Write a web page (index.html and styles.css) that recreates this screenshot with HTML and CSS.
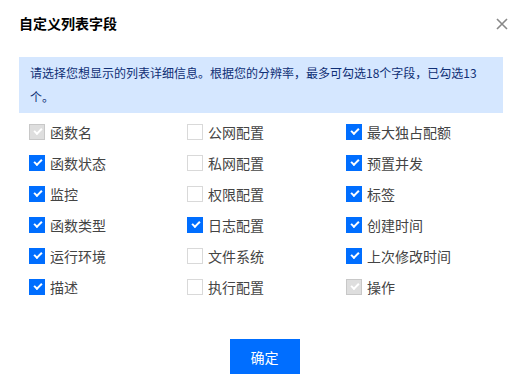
FILE: index.html
```html
<!DOCTYPE html>
<html lang="zh-CN">
<head>
  <meta charset="UTF-8">
  <title>自定义列表字段</title>
  <link rel="stylesheet" href="styles.css">
</head>
<body>
  <div class="dialog">
    <div class="dialog-head">
      <h2 class="dialog-title">自定义列表字段</h2>
      <button class="dialog-close" type="button" aria-label="关闭">
        <svg width="12" height="12" viewBox="0 0 12 12"><path d="M1 1L11 11M11 1L1 11" stroke="#888" stroke-width="1.6" fill="none"/></svg>
      </button>
    </div>

    <div class="notice">请选择您想显示的列表详细信息。根据您的分辨率，最多可勾选18个字段，已勾选13个。</div>

    <div class="fields">
      <label class="field"><span class="box disabled"></span>函数名</label>
      <label class="field"><span class="box"></span>公网配置</label>
      <label class="field"><span class="box checked"></span>最大独占配额</label>

      <label class="field"><span class="box checked"></span>函数状态</label>
      <label class="field"><span class="box"></span>私网配置</label>
      <label class="field"><span class="box checked"></span>预置并发</label>

      <label class="field"><span class="box checked"></span>监控</label>
      <label class="field"><span class="box"></span>权限配置</label>
      <label class="field"><span class="box checked"></span>标签</label>

      <label class="field"><span class="box checked"></span>函数类型</label>
      <label class="field"><span class="box checked"></span>日志配置</label>
      <label class="field"><span class="box checked"></span>创建时间</label>

      <label class="field"><span class="box checked"></span>运行环境</label>
      <label class="field"><span class="box"></span>文件系统</label>
      <label class="field"><span class="box checked"></span>上次修改时间</label>

      <label class="field"><span class="box checked"></span>描述</label>
      <label class="field"><span class="box"></span>执行配置</label>
      <label class="field"><span class="box disabled"></span>操作</label>
    </div>

    <div class="dialog-foot">
      <button class="btn-primary" type="button">确定</button>
    </div>
  </div>
</body>
</html>
```

FILE: styles.css
```css
body { margin: 0; background: #fff; font-family: "Noto Sans CJK SC", "Noto Sans", sans-serif; color: #444; }
.dialog { width: 529px; height: 385px; padding: 0 19px; box-sizing: border-box; }
.dialog-head { display: flex; justify-content: space-between; align-items: center; padding-top: 13px; height: 20px; }
.dialog-title { margin: 0; font-size: 14px; line-height: 20px; font-weight: bold; color: #000; }
.dialog-close { border: 0; background: none; padding: 0; width: 12px; height: 12px; display: flex; margin-right: 2px; margin-top: 2px; }
.notice { margin-top: 24px; width: 484px; box-sizing: border-box; background: #d5e7ff; color: #0f2f75; font-size: 12px; line-height: 24px; padding: 4px 24px 4px 11px; }
.fields { display: grid; grid-template-columns: 158px 159px 150px; grid-auto-rows: 31px; margin: 3px 0 0 10px; }
.field { display: flex; align-items: center; font-size: 14px; color: #444; height: 31px; }
.box { width: 16px; height: 16px; box-sizing: border-box; border: 1px solid #d9d9d9; background: #fff; margin-right: 5px; position: relative; }
.box.checked { background: #006eff; border-color: #006eff; }
.box.disabled { background: #dedede; border-color: #c8c8c8; }
.box.checked::after, .box.disabled::after { content: ""; position: absolute; left: 4px; top: 3px; width: 6px; height: 3px; border-left: 2px solid #fff; border-bottom: 2px solid #fff; transform: rotate(-45deg); }
.dialog-foot { display: flex; justify-content: center; margin-top: 37px; }
.btn-primary { width: 70px; height: 35px; border: 0; background: #006eff; color: #fff; font-size: 14px; font-family: inherit; }
```
